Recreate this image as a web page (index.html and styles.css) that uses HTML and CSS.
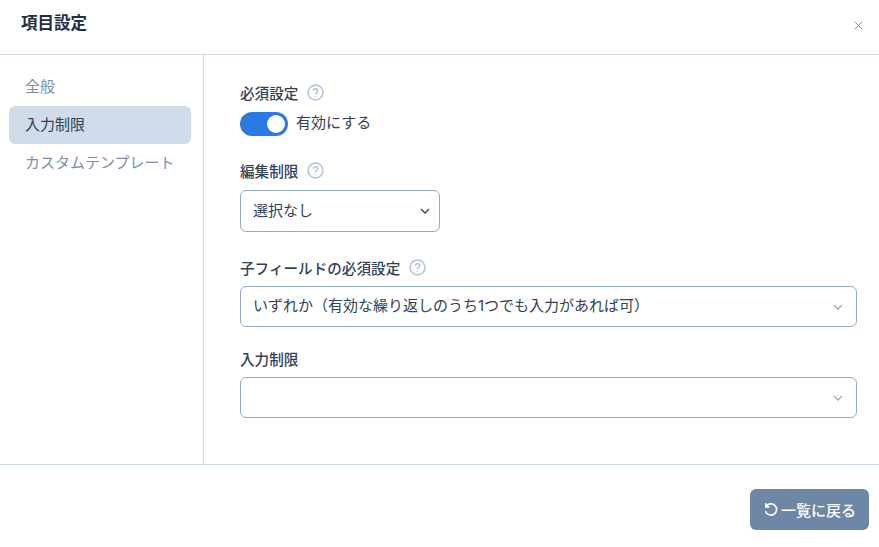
FILE: index.html
```html
<!DOCTYPE html>
<html lang="ja">
<head>
  <meta charset="UTF-8">
  <title>項目設定</title>
  <link rel="stylesheet" href="styles.css">
</head>
<body>
  <div class="modal">
    <header class="modal-header">
      <h1>項目設定</h1>
      <svg class="close" width="9" height="9" viewBox="0 0 9 9"><path d="M.8.8l7.4 7.4M8.2.8L.8 8.2"/></svg>
    </header>

    <div class="modal-body">
      <nav class="side">
        <a href="#">全般</a>
        <a href="#" class="active">入力制限</a>
        <a href="#">カスタムテンプレート</a>
      </nav>

      <main class="form">
        <div class="field field-toggle">
          <label>必須設定
            <svg class="help" width="17" height="17" viewBox="0 0 16 16"><circle cx="8" cy="8" r="7"/><path d="M6 6.3a2 2 0 1 1 3.1 1.7c-.7.5-1.1.9-1.1 1.7"/><path d="M8 11.4v.8"/></svg>
          </label>
          <div class="toggle-row">
            <span class="toggle"><span class="knob"></span></span>
            <span class="toggle-text">有効にする</span>
          </div>
        </div>

        <div class="field field-edit">
          <label>編集制限
            <svg class="help" width="17" height="17" viewBox="0 0 16 16"><circle cx="8" cy="8" r="7"/><path d="M6 6.3a2 2 0 1 1 3.1 1.7c-.7.5-1.1.9-1.1 1.7"/><path d="M8 11.4v.8"/></svg>
          </label>
          <div class="select select-small">
            <span class="value">選択なし</span>
            <svg class="chevron dark" width="10" height="6" viewBox="0 0 10 6"><path d="M1 1l4 4 4-4"/></svg>
          </div>
        </div>

        <div class="field field-child">
          <label>子フィールドの必須設定
            <svg class="help" width="17" height="17" viewBox="0 0 16 16"><circle cx="8" cy="8" r="7"/><path d="M6 6.3a2 2 0 1 1 3.1 1.7c-.7.5-1.1.9-1.1 1.7"/><path d="M8 11.4v.8"/></svg>
          </label>
          <div class="select">
            <span class="value">いずれか（有効な繰り返しのうち1つでも入力があれば可）</span>
            <svg class="chevron" width="10" height="6" viewBox="0 0 10 6"><path d="M1 1l4 4 4-4"/></svg>
          </div>
        </div>

        <div class="field">
          <label>入力制限</label>
          <div class="select">
            <span class="value"></span>
            <svg class="chevron" width="10" height="6" viewBox="0 0 10 6"><path d="M1 1l4 4 4-4"/></svg>
          </div>
        </div>
      </main>
    </div>

    <footer class="modal-footer">
      <button type="button">
        <svg width="16" height="16" viewBox="0 0 15 15"><path d="M2.6 2.2v3.4H6"/><path d="M2.8 5.4A5.3 5.3 0 1 1 2.4 9.6"/></svg>
        一覧に戻る
      </button>
    </footer>
  </div>
</body>
</html>
```

FILE: styles.css
```css
* {
  box-sizing: border-box;
}
body {
  margin: 0;
  font-family: Inter, "Noto Sans CJK JP", sans-serif;
  font-size: 15px;
  color: #334155;
  background: white;
}
.modal {
  width: 879px;
  height: 547px;
  display: flex;
  flex-direction: column;
}
.modal-header {
  height: 55px;
  padding: 0 16px 11px 21px;
  border-bottom: 1px solid #cbd9e8;
  display: flex;
  justify-content: space-between;
  align-items: center;
}
.modal-header h1 {
  margin: 0;
  font-size: 16.5px;
  font-weight: 700;
  color: #1e2f47;
}
.close {
  margin-top: 7px;
}
.close path {
  stroke: #8592a6;
  stroke-width: 1;
  fill: none;
}
.modal-body {
  height: 410px;
  display: flex;
  border-bottom: 1px solid #cbd9e8;
}
.side {
  width: 204px;
  padding: 13px 12px 0 9px;
  border-right: 1px solid #cbd9e8;
  display: flex;
  flex-direction: column;
}
.side a {
  height: 38px;
  padding: 0 0 4px 16px;
  border-radius: 6px;
  display: flex;
  align-items: center;
  color: #7c8ea6;
  text-decoration: none;
}
.side a.active {
  background: #d1dcea;
  color: #334155;
}
.form {
  flex: 1;
  padding: 27px 22px 0 36px;
}
.field label {
  display: flex;
  align-items: center;
  gap: 9px;
  height: 22px;
  padding-bottom: 1px;
  font-size: 14.6px;
  font-weight: 500;
  color: #334155;
}
.help {
  margin-top: -1px;
}
.help circle, .help path {
  fill: none;
  stroke: #b5c6de;
  stroke-width: 1.6;
}
.toggle-row {
  display: flex;
  align-items: center;
  gap: 8px;
  height: 24px;
  margin-top: 8px;
}
.toggle-text {
  margin-bottom: 6px;
}
.toggle {
  width: 48px;
  height: 24px;
  padding: 3px;
  border-radius: 12px;
  background: #2b7ae4;
  display: flex;
  justify-content: flex-end;
}
.knob {
  width: 18px;
  height: 18px;
  border-radius: 50%;
  background: white;
}
.field-toggle {
  height: 78px;
}
.field-edit {
  height: 97px;
}
.field-child {
  height: 91px;
}
.field .select {
  height: 41px;
  margin-top: 7px;
  padding: 0 13px 0 12px;
  border: 1px solid #93a9c9;
  border-radius: 6px;
  display: flex;
  justify-content: space-between;
  align-items: center;
}
.value {
  margin-bottom: 4px;
}
.field .select-small {
  width: 200px;
  height: 42px;
  margin-top: 8px;
  padding-right: 9px;
}
.chevron path {
  fill: none;
  stroke: #94a8c4;
  stroke-width: 1.3;
}
.chevron.dark path {
  stroke: #334155;
}
.modal-footer {
  flex: 1;
  padding: 24px 10px 0 0;
  display: flex;
  justify-content: flex-end;
  align-items: flex-start;
}
.modal-footer button {
  width: 119px;
  height: 41px;
  padding-bottom: 2px;
  border: none;
  border-radius: 6px;
  background: #6f87a6;
  color: white;
  font-family: inherit;
  font-size: 15px;
  font-weight: 500;
  display: flex;
  justify-content: center;
  align-items: center;
  gap: 2px;
  cursor: pointer;
}
.modal-footer svg path {
  fill: none;
  stroke: white;
  stroke-width: 1.6;
}
```
